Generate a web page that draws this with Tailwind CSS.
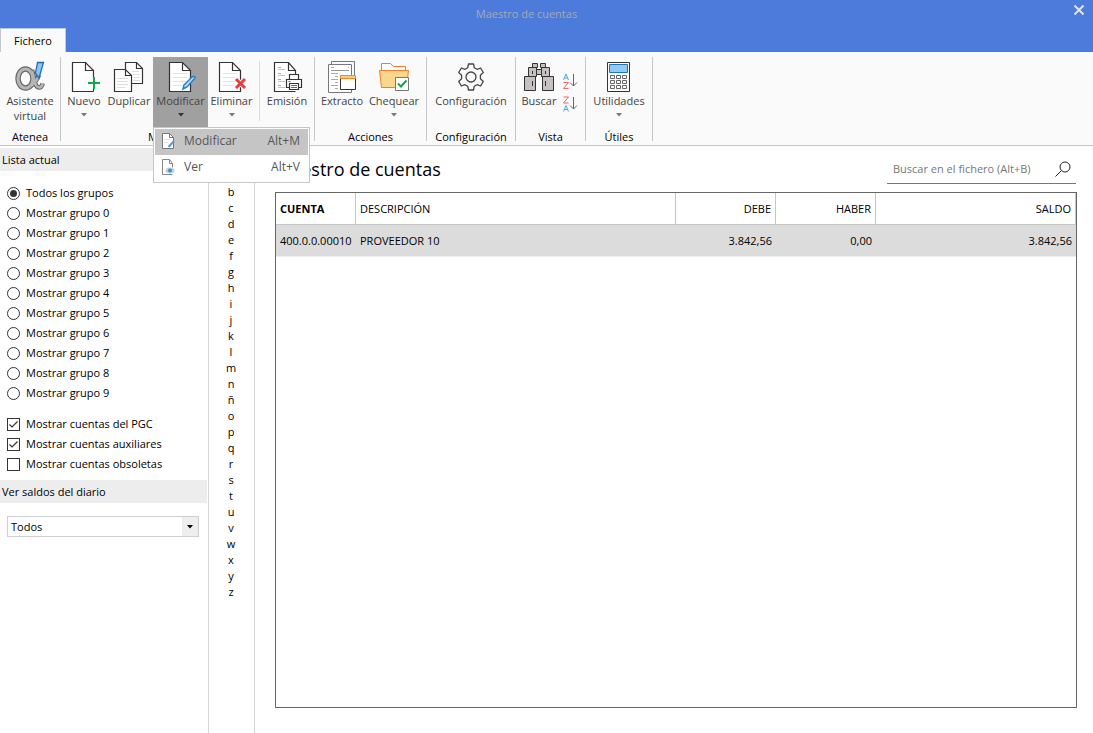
<!DOCTYPE html>
<html lang="es">
<head>
<meta charset="utf-8">
<meta name="viewport" content="width=device-width, initial-scale=1">
<title>Maestro de cuentas</title>
<script src="https://cdn.jsdelivr.net/npm/@tailwindcss/browser@4"></script>
</head>
<body class="flex h-screen flex-col overflow-hidden bg-white font-['Open_Sans','Noto_Sans',sans-serif] text-[11px] leading-4 text-black">

<header class="relative shrink-0 bg-[#4d7bdb]">
  <h1 class="h-7 pr-10 text-center text-[11px] leading-7 text-[#a3a9b5]">Maestro de cuentas</h1>
  <button type="button" aria-label="Cerrar" class="absolute top-1 right-2 grid size-3 place-items-center text-[#e4e4e4]">
    <svg class="size-3" viewBox="0 0 12 12" fill="none" stroke="currentColor" stroke-width="2"><path d="M1.500 1.500l9 9M10.500 1.500l-9 9"/></svg>
  </button>
  <nav class="flex h-6">
    <button type="button" class="w-[66px] border border-b-0 border-[#c3c7d0] bg-[#fafafa]">Fichero</button>
  </nav>
</header>

<section aria-label="Cinta" class="relative flex h-[94px] shrink-0 border-b border-[#c6c6c6] bg-[#fafafa] pt-[5px] pb-1 text-[#444]">
  <div class="flex w-[61px] flex-col justify-between border-r border-[#c6c6c6]">
    <button type="button" class="flex h-[70px] flex-col items-center pt-1 leading-[15px]">
      <svg class="size-8 shrink-0" viewBox="0 0 32 32" fill="none">
        <g stroke="#666">
          <ellipse cx="11.500" cy="17.500" rx="7.500" ry="9.500" stroke-width="5.500"/>
          <path d="M18 9C20 16 20.500 26.500 25 26.500q3 0 3.500-4M25 14C23 19 21 22 17 25" stroke-width="4.600"/>
        </g>
        <g stroke="#b5b5b5">
          <ellipse cx="11.500" cy="17.500" rx="7.500" ry="9.500" stroke-width="3.200"/>
          <path d="M18.300 10C20 16 20.500 26.500 25 26.500q3 0 3.500-3.500M24.500 15C23 19 21 22 17 25" stroke-width="2.400"/>
        </g>
        <path d="M23.500 1.500h6L25 17l-3.500-5z" fill="#8ec5ee" stroke="#1b6fb5" stroke-width="1.300"/>
      </svg>
      <span>Asistente<br>virtual</span>
    </button>
    <span class="text-center leading-[8px] text-black">Atenea</span>
  </div>

  <div class="flex w-[254px] flex-col justify-between border-r border-[#c6c6c6]">
    <div class="flex">
      <button type="button" class="flex h-[70px] w-[46px] flex-col items-center pt-1">
        <svg class="size-8" viewBox="0 0 32 32" fill="none" stroke-width="1.200"><path d="M25.500 30.500H4.500V1.500h13l8 8v7" fill="#fff" stroke="#333"/><path d="M17.500 1.500v8h8M25.500 28v2.500" stroke="#333"/><path d="M26 16v12M20 22h12" stroke="#12a650" stroke-width="2"/></svg>
        Nuevo
        <svg class="mt-1 h-1 w-2" viewBox="0 0 8 4"><path d="M1 0h6L4 3.500z" fill="#777"/></svg>
      </button>
      <button type="button" class="flex h-[70px] w-11 flex-col items-center pt-1">
        <svg class="size-8" viewBox="0 0 32 32" fill="none" stroke-width="1.200"><path d="M12.500 8V1.500h11l6 6v15h-12" fill="#fff" stroke="#333"/><path d="M23.500 1.500v6h6" stroke="#333"/><path d="M19 10.500h7M20 13.500h7M20 16.500h7M20 19.500h7" stroke="#ddd"/><path d="M1.500 8.500h11l6 6v16h-17z" fill="#fff" stroke="#333"/><path d="M12.500 8.500v6h6" stroke="#333"/><path d="M4 17.500h11M4 20.500h11M4 23.500h11M4 26.500h8" stroke="#ddd"/></svg>
        Duplicar
      </button>
      <button type="button" aria-haspopup="true" aria-expanded="true" class="ml-[2px] flex h-[70px] w-[55px] flex-col items-center bg-[#a0a0a0] pt-1">
        <svg class="size-8" viewBox="0 0 32 32" fill="none" stroke-width="1.200"><path d="M4.500 1.500h13l8 8v21h-21z" fill="#fff" stroke="#333"/><path d="M17.500 1.500v8h8" stroke="#333"/><path d="M8 12.500h14M8 16.500h14M8 20.500h13M8 24.500h9" stroke="#e4e4e4"/><path d="M19 24l8-8q3-1.500 3 1l-8 9-4 2z" fill="#b9def7" stroke="#2380c4" stroke-width="1.500"/></svg>
        Modificar
        <svg class="mt-1 h-1 w-2" viewBox="0 0 8 4"><path d="M1 0h6L4 3.500z" fill="#333"/></svg>
      </button>
      <button type="button" class="flex h-[70px] w-[47px] flex-col items-center pt-1">
        <svg class="size-8" viewBox="0 0 32 32" fill="none" stroke-width="1.200"><path d="M24.500 30.500h-21V1.500h13l8 8z" fill="#fff" stroke="#333"/><path d="M16.500 1.500v8h8" stroke="#333"/><path d="M7 12.500h14M7 16.500h12M7 20.500h12M7 24.500h11" stroke="#e4e4e4"/><path d="M19 17l11 11M30 17l-11 11" stroke="#fafafa" stroke-width="5"/><path d="M20 18l9 9M29 18l-9 9" stroke="#ee3a3a" stroke-width="3"/></svg>
        Eliminar
        <svg class="mt-1 h-1 w-2" viewBox="0 0 8 4"><path d="M1 0h6L4 3.500z" fill="#777"/></svg>
      </button>
      <div class="mt-1 ml-1 h-[60px] border-l border-[#dcdcdc]"></div>
      <button type="button" class="flex h-[70px] w-[54px] flex-col items-center pt-1">
        <svg class="size-8" viewBox="0 0 32 32" fill="none" stroke-width="1.200"><path d="M24.500 30.500h-21v-29h14l7 8v5" fill="#fff" stroke="#333"/><path d="M17.500 1.500v8h7" stroke="#333"/><path d="M7 6.500h3M7 12.500h3M7 18.500h3M7 24.500h3" stroke="#f49b25"/><path d="M7 8.500h7M7 14.500h7M7 20.500h7M7 26.500h7" stroke="#c4c4c4"/><path d="M18.500 18v-4.500h9V18M18.500 26.500h-3v-8h15v8h-3" fill="#fff" stroke="#333"/><path d="M18.500 22.500h9v6h-9z" fill="#fff" stroke="#333"/><path d="M20 24.500h6M20 26.500h6" stroke="#666"/><path d="M17.500 20.500h2" stroke="#2693d1"/></svg>
        Emisión
      </button>
    </div>
    <span class="text-center leading-[8px] text-black">Mantenimiento</span>
  </div>

  <div class="flex w-28 flex-col justify-between border-r border-[#c6c6c6]">
    <div class="flex">
      <button type="button" class="flex h-[70px] w-[54px] flex-col items-center pt-1">
        <svg class="size-8" viewBox="0 0 32 32" fill="none"><path d="M5.500 3V.500h23v28H26" fill="#fafafa" stroke="#777"/><path d="M2.500 3.500h23v28h-23z" fill="#fff" stroke="#777"/><path d="M5 6.500h3M22 6.500h1M5 12.500h7M9 15.500h3M5 18.500h7M9 21.500h3M5 24.500h7M9 27.500h3" stroke="#aaa"/><path d="M5 9.500h18" stroke="#999"/><path d="M14.500 17.500h15v11h-15z" fill="#fff" stroke="#333"/><path d="M14.500 14.500h15v3h-15z" fill="#f8cf7d" stroke="#ee8a2b"/></svg>
        Extracto
      </button>
      <button type="button" class="flex h-[70px] w-[50px] flex-col items-center pt-1">
        <svg class="size-8" viewBox="0 0 32 32" fill="none"><path d="M3.500 9V2.500h9l3 3h12V9" fill="#fff" stroke="#ed7f2b"/><path d="M1.500 9.500h29l-2 17h-25z" fill="#f8d88c" stroke="#ed7f2b"/><path d="M17.500 16.500h13v13h-13z" fill="#fff" stroke="#777"/><path d="M20 22.500l3 3 5.500-6" stroke="#12a650" stroke-width="2"/></svg>
        Chequear
        <svg class="mt-1 h-1 w-2" viewBox="0 0 8 4"><path d="M1 0h6L4 3.500z" fill="#777"/></svg>
      </button>
    </div>
    <span class="text-center leading-[8px] text-black">Acciones</span>
  </div>

  <div class="flex w-[89px] flex-col justify-between border-r border-[#c6c6c6]">
    <button type="button" class="flex h-[70px] flex-col items-center pt-1">
      <svg class="size-8" viewBox="0 0 32 32" fill="none" stroke="#444" stroke-width="1.300"><path d="M13.500 3h5l.8 3.800 2.700 1.500 3.600-1.300 2.700 4.500-2.900 2.700v3.600l2.900 2.700-2.700 4.500-3.600-1.300-2.700 1.500-.8 3.800h-5l-.8-3.800-2.700-1.500L6.400 25l-2.700-4.500 2.900-2.700v-3.600l-2.900-2.700L6.400 7 10 8.300l2.700-1.500z" stroke-linejoin="round"/><circle cx="16" cy="16" r="5"/></svg>
      Configuración
    </button>
    <span class="text-center leading-[8px] text-black">Configuración</span>
  </div>

  <div class="flex w-[70px] flex-col justify-between border-r border-[#c6c6c6]">
    <div class="flex">
      <button type="button" class="flex h-[70px] w-[46px] flex-col items-center pt-1">
        <svg class="size-8" viewBox="0 0 32 32" fill="#c4c1c0" stroke="#333"><path d="M9.500 2.500h5v4h-5zM17.500 2.500h5v4h-5zM13.500 8.500h5v5h-5zM5.500 6.500h8v9h-8zM18.500 6.500h8v9h-8zM1.500 15.500h11v14h-11zM19.500 15.500h11v14h-11z"/><path d="M9.500 20v5M22.500 20v5M9.500 10v3M22.500 10v3"/></svg>
        Buscar
      </button>
      <div class="flex flex-col gap-[7px] pt-4">
        <button type="button" aria-label="Orden ascendente" class="block h-4 w-4">
          <svg class="h-4 w-4" viewBox="0 0 16 16" fill="none"><path d="M1.500 7L4 1l2.500 6M2.300 5h3.400" stroke="#5ba5d9"/><path d="M1.500 9.500h5l-5 6h5" stroke="#ec6a6a"/><path d="M11.500 1v12M8 9.500l3.500 3.500L15 9.500" stroke="#666"/></svg>
        </button>
        <button type="button" aria-label="Orden descendente" class="block h-4 w-4">
          <svg class="h-4 w-4" viewBox="0 0 16 16" fill="none"><path d="M1.500 15.500L4 9.500l2.500 6M2.300 13.500h3.400" stroke="#5ba5d9"/><path d="M1.500 1h5l-5 6h5" stroke="#ec6a6a"/><path d="M11.500 1v12M8 9.500l3.500 3.500L15 9.500" stroke="#666"/></svg>
        </button>
      </div>
    </div>
    <span class="text-center leading-[8px] text-black">Vista</span>
  </div>

  <div class="flex w-[67px] flex-col justify-between border-r border-[#c6c6c6]">
    <button type="button" class="flex h-[70px] flex-col items-center pt-1">
      <svg class="size-8" viewBox="0 0 32 32" fill="#fff"><path d="M4.500 1.500h22v29h-22z" stroke="#333"/><path d="M6.500 3.500h18v8h-18z" fill="#93c8f0" stroke="#1b75bb"/><path d="M7.500 14.500h4v3h-4zM13.500 14.500h4v3h-4zM19.500 14.500h4v3h-4zM7.500 19.500h4v3h-4zM13.500 19.500h4v3h-4zM19.500 19.500h4v3h-4zM7.500 24.500h4v3h-4zM13.500 24.500h4v3h-4zM19.500 24.500h4v3h-4z" stroke="#666"/></svg>
      Utilidades
      <svg class="mt-1 h-1 w-2" viewBox="0 0 8 4"><path d="M1 0h6L4 3.500z" fill="#777"/></svg>
    </button>
    <span class="text-center leading-[8px] text-black">Útiles</span>
  </div>

  <div role="menu" class="absolute top-[75px] left-[153px] z-10 w-[157px] border border-[#c6c6c6] bg-white p-px text-xs text-[#555]">
    <button type="button" role="menuitem" class="flex h-[26px] w-full items-center bg-[#c5c5c5] pr-2 pb-[2px] pl-[5px]">
      <svg class="mr-2 size-4" viewBox="0 0 16 16" fill="none"><path d="M2.500.500h7l4 4v11h-11z" fill="#fff" stroke="#777"/><path d="M9.500.500v4h4" stroke="#777"/><path d="M4 6.500h6M4 9.500h4" stroke="#ddd"/><path d="M8.500 14l5.500-6" stroke="#4c9fd6" stroke-width="2"/></svg>
      <span class="grow text-left">Modificar</span><span>Alt+M</span>
    </button>
    <button type="button" role="menuitem" class="flex h-[26px] w-full items-center pr-2 pb-[2px] pl-[5px]">
      <svg class="mr-2 size-4" viewBox="0 0 16 16" fill="none"><path d="M12.500 15.500h-10V.500h7l3 4v4" fill="#fff" stroke="#888"/><path d="M9.500.500v4h3" stroke="#888"/><ellipse cx="10" cy="11.500" rx="4.500" ry="3" fill="#b8d4e8"/><circle cx="10" cy="11.500" r="2" fill="#468fc0"/></svg>
      <span class="grow text-left">Ver</span><span>Alt+V</span>
    </button>
  </div>
</section>

<div class="flex min-h-0 flex-1">
  <aside class="flex w-[209px] shrink-0 flex-col border-r border-[#d6d6d6] pt-[2px]">
    <h2 class="mr-px h-[23px] bg-[#ededed] pl-[2px] leading-6">Lista actual</h2>
    <div role="radiogroup" aria-label="Grupos" class="mt-3 pl-[7px]">
      <label class="flex h-5 items-center gap-[6px]"><input type="radio" name="g" checked class="size-[13px] appearance-none rounded-full border border-[#333] bg-white checked:bg-[#333] checked:bg-clip-content checked:p-[2px]">Todos los grupos</label>
      <label class="flex h-5 items-center gap-[6px]"><input type="radio" name="g" class="size-[13px] appearance-none rounded-full border border-[#333] bg-white checked:bg-[#333] checked:bg-clip-content checked:p-[2px]">Mostrar grupo 0</label>
      <label class="flex h-5 items-center gap-[6px]"><input type="radio" name="g" class="size-[13px] appearance-none rounded-full border border-[#333] bg-white checked:bg-[#333] checked:bg-clip-content checked:p-[2px]">Mostrar grupo 1</label>
      <label class="flex h-5 items-center gap-[6px]"><input type="radio" name="g" class="size-[13px] appearance-none rounded-full border border-[#333] bg-white checked:bg-[#333] checked:bg-clip-content checked:p-[2px]">Mostrar grupo 2</label>
      <label class="flex h-5 items-center gap-[6px]"><input type="radio" name="g" class="size-[13px] appearance-none rounded-full border border-[#333] bg-white checked:bg-[#333] checked:bg-clip-content checked:p-[2px]">Mostrar grupo 3</label>
      <label class="flex h-5 items-center gap-[6px]"><input type="radio" name="g" class="size-[13px] appearance-none rounded-full border border-[#333] bg-white checked:bg-[#333] checked:bg-clip-content checked:p-[2px]">Mostrar grupo 4</label>
      <label class="flex h-5 items-center gap-[6px]"><input type="radio" name="g" class="size-[13px] appearance-none rounded-full border border-[#333] bg-white checked:bg-[#333] checked:bg-clip-content checked:p-[2px]">Mostrar grupo 5</label>
      <label class="flex h-5 items-center gap-[6px]"><input type="radio" name="g" class="size-[13px] appearance-none rounded-full border border-[#333] bg-white checked:bg-[#333] checked:bg-clip-content checked:p-[2px]">Mostrar grupo 6</label>
      <label class="flex h-5 items-center gap-[6px]"><input type="radio" name="g" class="size-[13px] appearance-none rounded-full border border-[#333] bg-white checked:bg-[#333] checked:bg-clip-content checked:p-[2px]">Mostrar grupo 7</label>
      <label class="flex h-5 items-center gap-[6px]"><input type="radio" name="g" class="size-[13px] appearance-none rounded-full border border-[#333] bg-white checked:bg-[#333] checked:bg-clip-content checked:p-[2px]">Mostrar grupo 8</label>
      <label class="flex h-5 items-center gap-[6px]"><input type="radio" name="g" class="size-[13px] appearance-none rounded-full border border-[#333] bg-white checked:bg-[#333] checked:bg-clip-content checked:p-[2px]">Mostrar grupo 9</label>
    </div>
    <div class="mt-[11px] pl-[7px]">
      <label class="flex h-5 items-center gap-[6px]"><span class="grid"><input type="checkbox" checked class="peer col-start-1 row-start-1 size-[13px] appearance-none border border-[#333] bg-white"><svg class="pointer-events-none invisible col-start-1 row-start-1 size-[13px] peer-checked:visible" viewBox="0 0 13 13" fill="none" stroke="#333" stroke-width="1.200"><path d="M2.500 6.500l2.500 2.500 5.500-5.500"/></svg></span>Mostrar cuentas del PGC</label>
      <label class="flex h-5 items-center gap-[6px]"><span class="grid"><input type="checkbox" checked class="peer col-start-1 row-start-1 size-[13px] appearance-none border border-[#333] bg-white"><svg class="pointer-events-none invisible col-start-1 row-start-1 size-[13px] peer-checked:visible" viewBox="0 0 13 13" fill="none" stroke="#333" stroke-width="1.200"><path d="M2.500 6.500l2.500 2.500 5.500-5.500"/></svg></span>Mostrar cuentas auxiliares</label>
      <label class="flex h-5 items-center gap-[6px]"><span class="grid"><input type="checkbox" class="peer col-start-1 row-start-1 size-[13px] appearance-none border border-[#333] bg-white"><svg class="pointer-events-none invisible col-start-1 row-start-1 size-[13px] peer-checked:visible" viewBox="0 0 13 13" fill="none" stroke="#333" stroke-width="1.200"><path d="M2.500 6.500l2.500 2.500 5.500-5.500"/></svg></span>Mostrar cuentas obsoletas</label>
    </div>
    <h2 class="mt-[6px] mr-px h-[23px] bg-[#ededed] pl-[2px] leading-6"><label for="diario">Ver saldos del diario</label></h2>
    <div class="mt-[13px] mr-[9px] ml-[7px] grid border border-[#cfcfcf]">
      <select id="diario" class="col-start-1 row-start-1 h-[19px] appearance-none pl-[3px]"><option>Todos</option></select>
      <span class="pointer-events-none col-start-1 row-start-1 grid w-4 place-items-center justify-self-end bg-[#eee]"><svg class="h-1 w-2" viewBox="0 0 8 4"><path d="M1 0h6L4 3.500z"/></svg></span>
    </div>
  </aside>

  <nav aria-label="Índice alfabético" class="flex w-[46px] shrink-0 flex-col border-r border-[#d6d6d6] pt-[22px] pr-px text-center">
    <a href="#a">a</a><a href="#b">b</a><a href="#c">c</a><a href="#d">d</a><a href="#e">e</a><a href="#f">f</a><a href="#g">g</a><a href="#h">h</a><a href="#i">i</a><a href="#j">j</a><a href="#k">k</a><a href="#l">l</a><a href="#m">m</a><a href="#n">n</a><a href="#ñ">ñ</a><a href="#o">o</a><a href="#p">p</a><a href="#q">q</a><a href="#r">r</a><a href="#s">s</a><a href="#t">t</a><a href="#u">u</a><a href="#v">v</a><a href="#w">w</a><a href="#x">x</a><a href="#y">y</a><a href="#z">z</a>
  </nav>

  <main class="flex min-w-0 flex-1 flex-col pt-[9px] pr-4 pb-[25px] pl-5">
    <div class="flex items-start justify-between">
      <h2 class="text-lg leading-7">Maestro de cuentas</h2>
      <div class="mr-px flex h-[29px] w-[189px] items-center border-b border-[#777] pr-[5px] pl-[6px]">
        <input type="text" aria-label="Buscar en el fichero" placeholder="Buscar en el fichero (Alt+B)" class="min-w-0 flex-1 outline-none placeholder:text-[#777]">
        <button type="button" aria-label="Buscar"><svg class="size-4" viewBox="0 0 16 16" fill="none" stroke="#222"><circle cx="10" cy="6" r="5"/><path d="M6.500 9.500L.500 15.500"/></svg></button>
      </div>
    </div>
    <div class="mt-2 flex-1 border border-[#666]">
      <table class="w-full table-fixed border-separate border-spacing-0 text-right">
        <colgroup><col class="w-20"><col class="w-80"><col class="w-[100px]"><col class="w-[100px]"><col></colgroup>
        <thead>
          <tr class="h-8">
            <th class="border-r border-b border-[#c6c6c6] pl-1 text-left font-bold">CUENTA</th>
            <th class="border-r border-b border-[#c6c6c6] pl-1 text-left font-normal">DESCRIPCIÓN</th>
            <th class="border-r border-b border-[#c6c6c6] pr-1 font-normal">DEBE</th>
            <th class="border-r border-b border-[#c6c6c6] pr-1 font-normal">HABER</th>
            <th class="border-r border-b border-[#c6c6c6] pr-1 font-normal">SALDO</th>
          </tr>
        </thead>
        <tbody>
          <tr class="h-8 bg-[#dcdcdc]">
            <td class="border-b border-[#eee] pl-1 text-left whitespace-nowrap">400.0.0.00010</td>
            <td class="border-b border-[#eee] pl-1 text-left">PROVEEDOR 10</td>
            <td class="border-b border-[#eee] pr-1">3.842,56</td>
            <td class="border-b border-[#eee] pr-1">0,00</td>
            <td class="border-b border-[#eee] pr-1">3.842,56</td>
          </tr>
        </tbody>
      </table>
    </div>
  </main>
</div>
</body>
</html>
